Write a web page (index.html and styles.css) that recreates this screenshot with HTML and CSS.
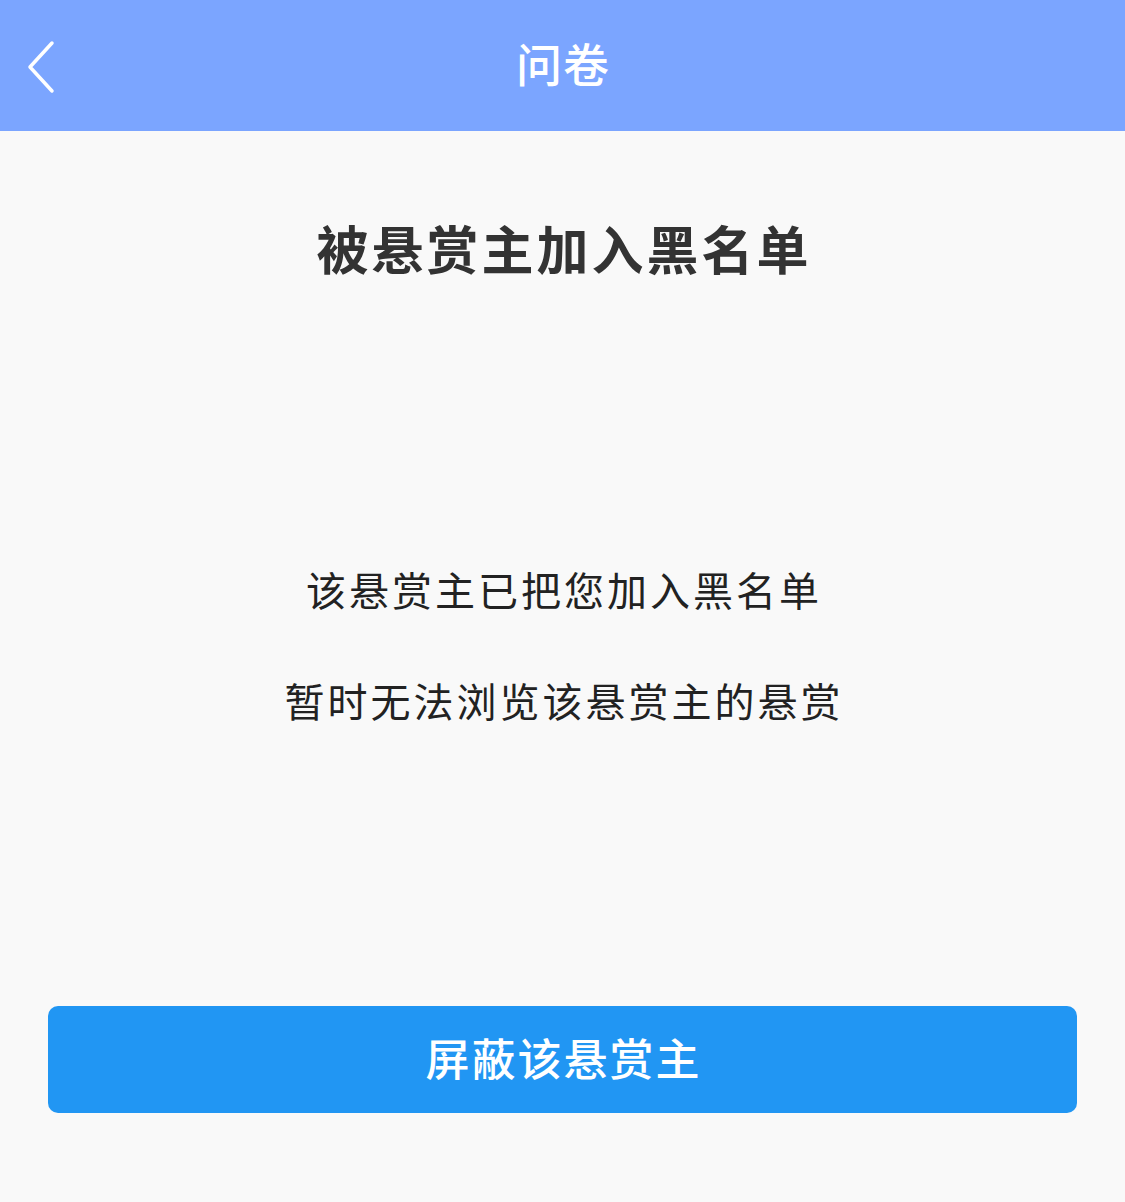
FILE: index.html
```html
<!DOCTYPE html>
<html lang="zh-CN">
<head>
<meta charset="utf-8">
<title>问卷</title>
<link rel="stylesheet" href="styles.css">
</head>
<body>
<header class="topbar">
  <button class="back" aria-label="返回">
    <svg width="40" height="56" viewBox="0 0 40 56"><path d="M32 4 L10 28 L32 52" fill="none" stroke="#fff" stroke-width="3.5" stroke-linecap="round" stroke-linejoin="round"/></svg>
  </button>
  <h1 class="title">问卷</h1>
</header>
<main class="content">
  <h2 class="heading">被悬赏主加入黑名单</h2>
  <p class="line line-first">该悬赏主已把您加入黑名单</p>
  <p class="line line-second">暂时无法浏览该悬赏主的悬赏</p>
  <button class="block-btn">屏蔽该悬赏主</button>
</main>
</body>
</html>
```
FILE: styles.css
```css
html, body {
  margin: 0;
  padding: 0;
  background: #f9f9f9;
  font-family: "Noto Sans CJK SC", "Noto Sans", sans-serif;
}
.topbar {
  position: relative;
  height: 131px;
  background: #7ba5ff;
  display: flex;
  align-items: center;
  justify-content: center;
}
.back {
  position: absolute;
  left: 20px;
  top: 39px;
  padding: 0;
  border: 0;
  background: none;
  display: flex;
}
.title {
  margin: 0;
  color: #fff;
  font-size: 46px;
  font-weight: 500;
  line-height: 46px;
  letter-spacing: 1px;
  padding: 0 0 8px 1px;
}
.content {
  display: flex;
  flex-direction: column;
  align-items: stretch;
}
.heading {
  margin: 91px 0 0;
  text-align: center;
  font-size: 52px;
  line-height: 52px;
  font-weight: 700;
  color: #333;
  letter-spacing: 3px;
  padding-left: 3px;
}
.line {
  margin: 0;
  text-align: center;
  font-size: 40px;
  line-height: 40px;
  color: #222;
  letter-spacing: 3px;
  padding-left: 3px;
}
.line-first { margin-top: 295px; }
.line-second { margin-top: 71px; }
.block-btn {
  margin: 286px 48px 0;
  height: 107px;
  border: 0;
  border-radius: 10px;
  background: #2196f3;
  color: #fff;
  font-family: inherit;
  font-size: 44px;
  font-weight: 500;
  letter-spacing: 2px;
  padding: 0 0 6px 2px;
}
```
